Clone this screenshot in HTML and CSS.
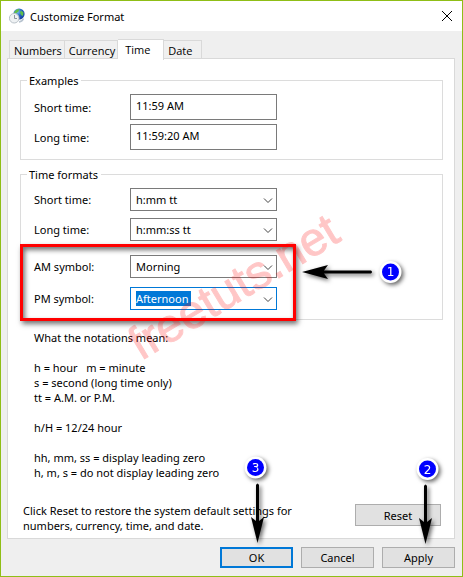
FILE: index.html
```html
<!DOCTYPE html>
<html lang="en">
<head>
<meta charset="utf-8">
<title>Customize Format</title>
<link rel="stylesheet" href="styles.css">
</head>
<body>
<main class="window">
  <header class="titlebar">
    <svg class="app-icon" viewBox="0 0 16 16" aria-hidden="true">
      <defs>
        <radialGradient id="globe" cx=".35" cy=".3" r=".8"><stop offset="0" stop-color="#7fc4ee"/><stop offset=".5" stop-color="#2363c4"/><stop offset="1" stop-color="#163a9a"/></radialGradient>
      </defs>
      <circle cx="10" cy="6" r="5.600" fill="url(#globe)"/>
      <path d="M6 3Q8 .6 10.500 1L9.500 3.500L7 5.500L5 5ZM12 2.500L14.500 4.500L14 8L12 7L11 4.500Z" fill="#5fbe4a"/>
      <path d="M10 14Q13.500 13.500 14.500 10.500" fill="none" stroke="#b6c2ce" stroke-width="1.500"/>
      <circle cx="5.200" cy="10.200" r="4.800" fill="#eef1f3" stroke="#b9c2c8"/>
      <path d="M5.500 7V10.500H8" fill="none" stroke="#8a959d"/>
    </svg>
    <h1 class="title">Customize Format</h1>
    <button class="close" type="button" aria-label="Close">
      <svg viewBox="0 0 10 10" aria-hidden="true"><path d="M0 0L10 10M10 0L0 10"/></svg>
    </button>
  </header>

  <nav class="tabs">
    <button class="tab" type="button">Numbers</button>
    <button class="tab" type="button">Currency</button>
    <button class="tab active" type="button">Time</button>
    <button class="tab" type="button">Date</button>
  </nav>

  <section class="panel">
    <fieldset class="group">
      <legend>Examples</legend>
      <div class="rows tight">
        <label for="ex-short">Short time:</label>
        <input id="ex-short" class="sample" type="text" value="11:59 AM" readonly>
        <label for="ex-long">Long time:</label>
        <input id="ex-long" class="sample" type="text" value="11:59:20 AM" readonly>
      </div>
    </fieldset>

    <fieldset class="group">
      <legend>Time formats</legend>
      <div class="rows">
        <label for="short">Short time:</label>
        <div class="combo"><select id="short"><option>h:mm tt</option></select><svg viewBox="0 0 8 5" aria-hidden="true"><path d="M0 .5L4 4.500L8 .5"/></svg></div>
        <label for="long">Long time:</label>
        <div class="combo"><select id="long"><option>h:mm:ss tt</option></select><svg viewBox="0 0 8 5" aria-hidden="true"><path d="M0 .5L4 4.500L8 .5"/></svg></div>
      </div>
      <div class="rows symbols">
        <label for="am">AM symbol:</label>
        <div class="combo"><select id="am"><option>Morning</option></select><svg viewBox="0 0 8 5" aria-hidden="true"><path d="M0 .5L4 4.500L8 .5"/></svg></div>
        <label for="pm">PM symbol:</label>
        <div class="combo selected"><select id="pm"><option>Afternoon</option></select><svg viewBox="0 0 8 5" aria-hidden="true"><path d="M0 .5L4 4.500L8 .5"/></svg></div>
        <svg class="marker marker-side" viewBox="0 0 110 32" aria-hidden="true">
          <path d="M2 16L28 9L24 14.500H71Q73 16 71 17.500H24L28 23Z"/>
          <circle class="ring" cx="90.500" cy="16" r="11"/>
          <circle class="dot" cx="90.500" cy="16" r="8.500"/>
          <text x="90.500" y="20">1</text>
        </svg>
        <svg class="watermark" viewBox="0 0 260 170" aria-hidden="true">
          <text transform="translate(31 159) rotate(-31)">freetuts.net</text>
        </svg>
      </div>
    </fieldset>

    <div class="notes">
      <p>What the notations mean:</p>
      <p>h = hour &nbsp; m = minute<br>s = second (long time only)<br>tt = A.M. or P.M.</p>
      <p>h/H = 12/24 hour</p>
      <p>hh, mm, ss = display leading zero<br>h, m, s = do not display leading zero</p>
    </div>

    <div class="reset">
      <p>Click Reset to restore the system default settings for<br>numbers, currency, time, and date.</p>
      <button class="btn wide" type="button">Reset</button>
    </div>
  </section>

  <footer class="actions">
    <div class="action">
      <button class="btn default" type="button">OK</button>
      <svg class="marker marker-ok" viewBox="0 0 36 94" aria-hidden="true">
        <path d="M17.500 89L11 63L16 67V31Q17.500 28 19 31V67L24 63Z"/>
        <circle class="ring" cx="15.500" cy="13.500" r="11"/>
        <circle class="dot" cx="15.500" cy="13.500" r="8.500"/>
        <text x="15.500" y="18">3</text>
      </svg>
    </div>
    <div class="action"><button class="btn" type="button">Cancel</button></div>
    <div class="action">
      <button class="btn" type="button">Apply</button>
      <svg class="marker marker-apply" viewBox="0 0 36 94" aria-hidden="true">
        <path d="M15.500 90L9 64L14 68V32Q15.500 29 17 32V68L22 64Z"/>
        <circle class="ring" cx="17.500" cy="15" r="11"/>
        <circle class="dot" cx="17.500" cy="15" r="8.500"/>
        <text x="17.500" y="20">2</text>
      </svg>
    </div>
  </footer>
</main>
</body>
</html>
```

FILE: styles.css
```css
* {
  box-sizing: border-box;
}

body {
  margin: 0;
  font: 11px/15px "Noto Sans", "Open Sans", sans-serif;
  color: #000;
}

button,
input,
select {
  font: inherit;
  color: inherit;
  border-radius: 0;
  margin: 0;
}

p {
  margin: 0;
}

.window {
  position: relative;
  display: flex;
  flex-direction: column;
  min-height: 100vh;
  border: 1px solid #8fbe16;
  background: #efefef;
}

.titlebar {
  display: flex;
  align-items: center;
  height: 30px;
  padding: 0 10px 0 8px;
  background: #fff;
}

.app-icon {
  width: 16px;
  height: 16px;
  margin-right: 5px;
}

.title {
  flex: 1;
  margin: 0;
  font-size: 11px;
  font-weight: 400;
}

.close {
  display: flex;
  padding: 0;
  border: 0;
  background: none;
}

.close svg {
  width: 10px;
  height: 10px;
  overflow: visible;
  stroke: #000;
}

.tabs {
  display: flex;
  align-items: flex-end;
  height: 28px;
  padding-left: 8px;
  font-family: "Open Sans", "Noto Sans", sans-serif;
}

.tab {
  min-width: 38px;
  height: 19px;
  padding: 0 2px 0 4px;
  border: 1px solid #d9d9d9;
  border-width: 1px 1px 0 0;
  background: #f0f0f0;
  text-align: left;
}

.tab:first-child {
  border-left-width: 1px;
}

.tab.active {
  position: relative;
  min-width: 46px;
  height: 21px;
  margin-bottom: -1px;
  padding: 0 7px 2px;
  background: #fff;
}

.panel {
  flex: 1;
  margin: -1px 7px 0 6px;
  padding: 14px 11px 0 12px;
  border: 1px solid #d9d9d9;
  background: #fff;
}

.group {
  min-width: 0;
  margin: 0 0 7px;
  padding: 6px 13px 9px;
  border: 1px solid #dcdcdc;
}

.group legend {
  margin-left: -7px;
  padding: 0 3px 0 2px;
}

.rows {
  position: relative;
  display: grid;
  grid-template-columns: 96px 147px;
  row-gap: 7px;
  align-items: center;
  width: max-content;
}

.rows.tight {
  row-gap: 4px;
}

.sample {
  height: 26px;
  padding: 0 5px 4px;
  border: 1px solid #7a7a7a;
  background: #fff;
}

.combo {
  position: relative;
}

.combo select {
  display: block;
  width: 100%;
  height: 23px;
  padding: 0 5px;
  border: 1px solid #7a7a7a;
  background: #fff;
  appearance: none;
}

.combo svg {
  position: absolute;
  top: 10px;
  right: 5px;
  width: 8px;
  height: 5px;
  fill: none;
  stroke: #444;
  overflow: visible;
  pointer-events: none;
}

.combo.selected select {
  border-color: #0078d7;
  color: #fff;
  background: linear-gradient(#0078d7, #0078d7) 5px 3px / 55px 15px no-repeat #fff;
}

.symbols {
  row-gap: 9px;
  margin-top: 14px;
}

.symbols::before {
  content: "";
  position: absolute;
  inset: -11px -19px -11px -14px;
  border: 3px solid #f00;
  box-shadow: 2px 3px 5px rgba(0, 0, 0, .55), inset 2px 3px 5px rgba(0, 0, 0, .55);
  pointer-events: none;
}

.marker {
  position: absolute;
  overflow: visible;
  pointer-events: none;
  filter: drop-shadow(2px 2px 2px rgba(0, 0, 0, .6));
}

.marker .ring {
  fill: #fff;
}

.marker .dot {
  fill: #00f;
}

.marker text {
  fill: #fff;
  font: 12px "DejaVu Sans", sans-serif;
  text-anchor: middle;
}

.marker-side {
  left: 266px;
  top: 1px;
  width: 110px;
  height: 32px;
}

.watermark {
  position: absolute;
  left: 76px;
  top: -53px;
  width: 260px;
  height: 170px;
  overflow: visible;
  pointer-events: none;
}

.watermark text {
  fill: #f00;
  stroke: #f00;
  opacity: .22;
  font: 47px "Liberation Sans", sans-serif;
}

.notes {
  display: grid;
  gap: 15px;
  padding: 3px 0 0 14px;
}

.reset {
  display: flex;
  justify-content: space-between;
  align-items: flex-start;
  margin-top: 23px;
  padding-left: 3px;
}

.btn {
  width: 73px;
  height: 21px;
  padding: 0;
  border: 1px solid #adadad;
  background: #e1e1e1;
}

.btn.wide {
  width: 86px;
  height: 22px;
  margin: 1px 2px 0 0;
}

.btn.default {
  border: 2px solid #0078d7;
}

.actions {
  display: flex;
  justify-content: flex-end;
  gap: 8px;
  padding: 8px 7px 8px 0;
}

.action {
  position: relative;
  display: flex;
}

.marker-ok,
.marker-apply {
  top: -93px;
  width: 36px;
  height: 94px;
}

.marker-ok {
  left: 20px;
}

.marker-apply {
  left: 28px;
}
```
